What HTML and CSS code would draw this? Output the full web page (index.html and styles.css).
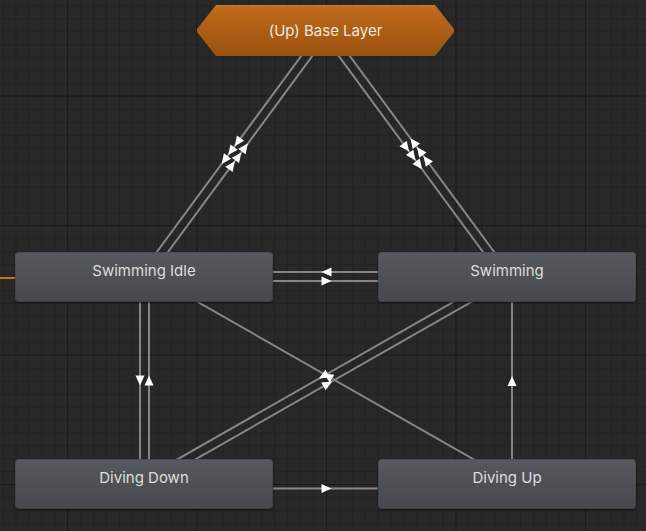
FILE: index.html
```html
<!DOCTYPE html>
<html>
<head>
<meta charset="utf-8">
<link rel="stylesheet" href="styles.css">
</head>
<body>
<div class="canvas">
  <svg class="edges" width="646" height="531" viewBox="0 0 646 531">
    <defs>
      <polygon id="arr" points="5,0 -5,-4.5 -5,4.5"/>
    </defs>
    <line class="entry" x1="-20" y1="278" x2="20" y2="278"/>
    <g class="tr">
      <!-- Base <-> Idle -->
      <line x1="321.9" y1="27.8" x2="140.4" y2="274.3"/>
      <line x1="147.6" y1="279.7" x2="329.1" y2="33.2"/>
      <!-- Base <-> Swimming -->
      <line x1="321.9" y1="33.2" x2="503.4" y2="279.7"/>
      <line x1="510.6" y1="274.3" x2="329.1" y2="27.8"/>
      <!-- Idle <-> Swimming -->
      <line x1="144" y1="281" x2="507" y2="281"/>
      <line x1="507" y1="272" x2="144" y2="272"/>
      <!-- Idle <-> Diving Down -->
      <line x1="140" y1="277" x2="140" y2="484"/>
      <line x1="149" y1="484" x2="149" y2="277"/>
      <!-- Diving Down -> Diving Up -->
      <line x1="144" y1="488.5" x2="507" y2="488.5"/>
      <!-- Diving Up -> Swimming -->
      <line x1="512" y1="484" x2="512" y2="277"/>
      <!-- Diving Up -> Idle -->
      <line x1="509.2" y1="479.6" x2="146.2" y2="272.6"/>
      <!-- Swimming <-> Diving Down -->
      <line x1="504.8" y1="272.6" x2="141.8" y2="479.6"/>
      <line x1="146.2" y1="487.4" x2="509.2" y2="280.4"/>
    </g>
    <g class="arrows">
      <use href="#arr" transform="translate(224.6,160) rotate(126.4)"/>
      <use href="#arr" transform="translate(231.1,151.1) rotate(126.4)"/>
      <use href="#arr" transform="translate(237.6,142.2) rotate(126.4)"/>
      <use href="#arr" transform="translate(231.9,165.3) rotate(-53.6)"/>
      <use href="#arr" transform="translate(238.4,156.4) rotate(-53.6)"/>
      <use href="#arr" transform="translate(244.9,147.5) rotate(-53.6)"/>

      <use href="#arr" transform="translate(406.1,147.5) rotate(53.6)"/>
      <use href="#arr" transform="translate(412.6,156.4) rotate(53.6)"/>
      <use href="#arr" transform="translate(419.1,165.3) rotate(53.6)"/>
      <use href="#arr" transform="translate(413.4,142.2) rotate(-126.4)"/>
      <use href="#arr" transform="translate(419.9,151.1) rotate(-126.4)"/>
      <use href="#arr" transform="translate(426.4,160) rotate(-126.4)"/>

      <use href="#arr" transform="translate(326.5,281) rotate(0)"/>
      <use href="#arr" transform="translate(326.5,272) rotate(180)"/>
      <use href="#arr" transform="translate(140,380.5) rotate(90)"/>
      <use href="#arr" transform="translate(149,380.5) rotate(-90)"/>
      <use href="#arr" transform="translate(326.5,488.5) rotate(0)"/>
      <use href="#arr" transform="translate(512,381) rotate(-90)"/>

      <use href="#arr" transform="translate(327.7,376.1) rotate(-150.3)"/>
      <use href="#arr" transform="translate(323.3,376.1) rotate(150.3)"/>
      <use href="#arr" transform="translate(327.7,383.9) rotate(-29.7)"/>
    </g>
  </svg>

  <div class="layer"><span>(Up) Base Layer</span></div>

  <div class="state st-idle">Swimming Idle</div>
  <div class="state st-swim">Swimming</div>
  <div class="state st-down">Diving Down</div>
  <div class="state st-up">Diving Up</div>
</div>
</body>
</html>
```

FILE: styles.css
```css
html, body {
  margin: 0;
  padding: 0;
  background: #282828;
}

.canvas {
  position: relative;
  width: 646px;
  height: 531px;
  overflow: hidden;
  background-color: #282828;
  background-image:
    linear-gradient(to right, #1a1a1a 1px, transparent 1px),
    linear-gradient(to bottom, #1a1a1a 1px, transparent 1px),
    linear-gradient(to right, #222222 1px, transparent 1px),
    linear-gradient(to bottom, #222222 1px, transparent 1px);
  background-size: 129.5px 129.5px, 129.5px 129.5px, 12.95px 12.95px, 12.95px 12.95px;
  background-position: 67px 95.5px, 67px 95.5px, 2.5px 5.5px, 2.5px 5.5px;
  font-family: Inter, "Noto Sans", sans-serif;
}

.edges {
  position: absolute;
  left: 0;
  top: 0;
}

.tr line {
  stroke: #858585;
  stroke-width: 2;
}

.entry {
  stroke: #c8741e;
  stroke-width: 2;
}

.arrows use {
  fill: #ffffff;
}

.layer {
  position: absolute;
  left: 197px;
  top: 5px;
  width: 257px;
  height: 51px;
  background: linear-gradient(to bottom, #d07a2a 0, #c06a1c 2px, #9a510f 100%);
  clip-path: polygon(19px 0, calc(100% - 19px) 0, 100% 24px, 100% 27px, calc(100% - 19px) 100%, 19px 100%, 0 27px, 0 24px);
  display: flex;
  align-items: center;
  justify-content: center;
  color: #f3e7dc;
  font-size: 15px;
  padding-bottom: 1px;
  box-sizing: border-box;
}

.state {
  position: absolute;
  width: 258px;
  height: 50px;
  box-sizing: border-box;
  padding-top: 10px;
  line-height: 18px;
  text-align: center;
  color: #dedede;
  font-size: 15px;
  border-radius: 4px;
  background: linear-gradient(to bottom, #56595e 0, #4c4f53 60%, #46494d 100%);
  box-shadow: 0 1px 2px rgba(0, 0, 0, 0.55), inset 0 0 0 1px rgba(0, 0, 0, 0.12);
}

.st-idle { left: 15px; top: 252px; }
.st-swim { left: 378px; top: 252px; }
.st-down { left: 15px; top: 459px; }
.st-up { left: 378px; top: 459px; }
```
